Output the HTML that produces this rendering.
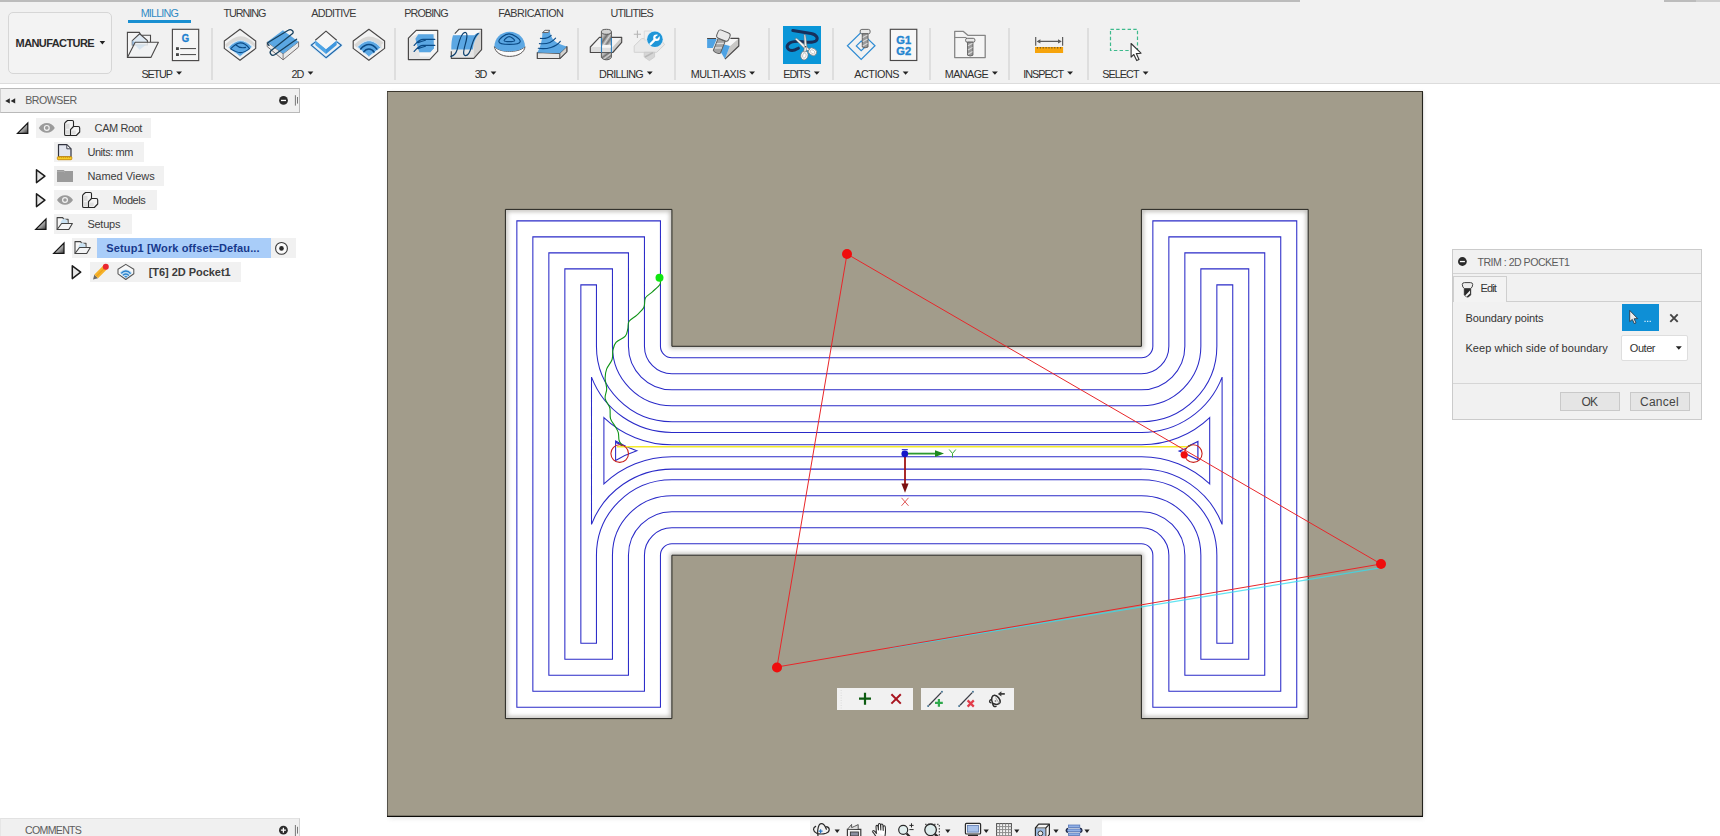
<!DOCTYPE html><html><head><meta charset="utf-8"><title>Fusion 360 - Manufacture</title><style>
html,body{margin:0;padding:0;background:#fff;}
body{width:1720px;height:836px;overflow:hidden;position:relative;font-family:"Liberation Sans",sans-serif;font-size:11px;color:#333;}
div{position:absolute;box-sizing:border-box;}
svg{position:absolute;left:0;top:0;}
svg text{font-family:"Liberation Sans",sans-serif;}
#tb{left:0;top:0;width:1720px;height:84px;background:#f1f1f1;border-bottom:1px solid #dcdcdc;}
.ts{top:0;height:2px;background:#bcbcbc;}
#wsb{left:8px;top:12px;width:104px;height:62px;border:1.4px solid #d6d6d6;border-radius:5px;background:#f3f3f3;}
.dv{top:27.8px;width:2px;height:52px;background:#dedede;}
#tabu{left:128.2px;top:20.4px;width:63px;height:3px;background:#1a8fd1;}
#edbg{left:782.5px;top:26px;width:38.7px;height:38px;background:#0a96d8;}
#bh{left:0;top:88px;width:300px;height:25px;background:#f0f0f0;border:1px solid #b9b9b9;border-left-color:#cfcfcf;}
#ch{left:0;top:818px;width:300px;height:20px;background:#f0f0f0;border:1px solid #d2d2d2;border-top-color:#e2e2e2;border-left-color:#e6e6e6;border-bottom:none;}
.rw{height:19.5px;background:#f1f1f1;}
#sel{left:97px;top:238.3px;width:174px;height:19.5px;background:#a9cdf9;}
#dlg{left:1452px;top:249px;width:250px;height:171px;background:#f1f1f1;border:1px solid #cbcbcb;}
#dlgh{left:0;top:0;width:248px;height:24px;border-bottom:1px solid #d3d3d3;}
#dtab{left:0px;top:26px;width:54px;height:26px;border:1px solid #cfcfcf;border-bottom:none;background:#f3f3f3;}
#dtl{left:53px;top:51px;width:195px;height:1px;background:#cfcfcf;}
#bsel{left:169px;top:54.3px;width:37.2px;height:27px;background:#0e8fd6;}
#dd{left:168.4px;top:84.8px;width:66.2px;height:26.4px;background:#fff;border:1px solid #dedede;border-radius:2px;}
#dsep{left:0;top:133px;width:248px;height:1px;background:#d6d6d6;}
.btn{top:142px;height:18.6px;background:#e5e5e5;border:1px solid #c9c9c9;}
.ft{top:687.8px;height:22.4px;background:#f1f1f1;}
#nb{left:810px;top:818px;width:292px;height:18px;background:#f1f1f1;}
</style></head><body>
<svg id="cv" width="1720" height="836" viewBox="0 0 1720 836">
<defs><filter id="bl" x="-5%" y="-5%" width="110%" height="110%"><feGaussianBlur stdDeviation="2.2"/></filter><filter id="bl2" x="-2%" y="-2%" width="104%" height="104%"><feGaussianBlur stdDeviation="2.5"/></filter><clipPath id="hc"><path d="M505.4 209.4H671.9V346.3H1141.4V209.4H1308.2V718.6H1141.4V555.2H671.9V718.6H505.4Z"/></clipPath></defs>
<rect x="389" y="93" width="1034" height="725" fill="#8a8a8a" opacity="0.28" filter="url(#bl2)"/>
<rect x="387.5" y="91.5" width="1035" height="725" fill="#a29c8b"/>
<path d="M387.5 816.5V91.5" stroke="#55524a" stroke-width="1"/><path d="M387 91.5H1423" stroke="#3c382e" stroke-width="1.1"/><path d="M1422.5 91.5V816.5" stroke="#24231c" stroke-width="1.1"/><path d="M387 816.4H1423" stroke="#0c0b08" stroke-width="1.4"/>
<path d="M505.4 209.4H671.9V346.3H1141.4V209.4H1308.2V718.6H1141.4V555.2H671.9V718.6H505.4Z" fill="#fff"/>
<g clip-path="url(#hc)"><path d="M505.4 209.4H671.9V346.3H1141.4V209.4H1308.2V718.6H1141.4V555.2H671.9V718.6H505.4Z" fill="none" stroke="#b9b7b2" stroke-width="4" filter="url(#bl)"/></g>
<path d="M505.4 209.4H671.9V346.3H1141.4V209.4H1308.2V718.6H1141.4V555.2H671.9V718.6H505.4Z" fill="none" stroke="#23221d" stroke-width="1"/>
<path d="M516.85 220.85L660.45 220.85L660.45 346.3A11.45 11.45 0 0 0 671.9 357.75L1141.4 357.75A11.45 11.45 0 0 0 1152.85 346.3L1152.85 220.85L1296.75 220.85L1296.75 707.15L1152.85 707.15L1152.85 555.2A11.45 11.45 0 0 0 1141.4 543.75L671.9 543.75A11.45 11.45 0 0 0 660.45 555.2L660.45 707.15L516.85 707.15ZM532.85 236.85L644.45 236.85L644.45 346.3A27.45 27.45 0 0 0 671.9 373.75L1141.4 373.75A27.45 27.45 0 0 0 1168.85 346.3L1168.85 236.85L1280.75 236.85L1280.75 691.15L1168.85 691.15L1168.85 555.2A27.45 27.45 0 0 0 1141.4 527.75L671.9 527.75A27.45 27.45 0 0 0 644.45 555.2L644.45 691.15L532.85 691.15ZM548.85 252.85L628.45 252.85L628.45 346.3A43.45 43.45 0 0 0 671.9 389.75L1141.4 389.75A43.45 43.45 0 0 0 1184.85 346.3L1184.85 252.85L1264.75 252.85L1264.75 675.15L1184.85 675.15L1184.85 555.2A43.45 43.45 0 0 0 1141.4 511.75L671.9 511.75A43.45 43.45 0 0 0 628.45 555.2L628.45 675.15L548.85 675.15ZM564.85 268.85L612.45 268.85L612.45 346.3A59.45 59.45 0 0 0 671.9 405.75L1141.4 405.75A59.45 59.45 0 0 0 1200.85 346.3L1200.85 268.85L1248.75 268.85L1248.75 659.15L1200.85 659.15L1200.85 555.2A59.45 59.45 0 0 0 1141.4 495.75L671.9 495.75A59.45 59.45 0 0 0 612.45 555.2L612.45 659.15L564.85 659.15ZM580.85 284.85L596.45 284.85L596.45 346.3A75.45 75.45 0 0 0 671.9 421.75L1141.4 421.75A75.45 75.45 0 0 0 1216.85 346.3L1216.85 284.85L1232.75 284.85L1232.75 643.15L1216.85 643.15L1216.85 555.2A75.45 75.45 0 0 0 1141.4 479.75L671.9 479.75A75.45 75.45 0 0 0 596.45 555.2L596.45 643.15L580.85 643.15ZM591.5 377.11A86.1 86.1 0 0 0 671.9 432.4L1141.4 432.4A86.1 86.1 0 0 0 1222.1 377.11L1222.1 524.39A86.1 86.1 0 0 0 1141.4 469.1L671.9 469.1A86.1 86.1 0 0 0 591.5 524.39ZM603.9 417.56A98.5 98.5 0 0 0 671.9 444.8L1141.4 444.8A98.5 98.5 0 0 0 1209.7 417.56L1209.7 483.94A98.5 98.5 0 0 0 1141.4 456.7L671.9 456.7A98.5 98.5 0 0 0 603.9 483.94ZM615.6 441.03A110.2 110.2 0 0 0 636.77 450.75A110.2 110.2 0 0 0 615.6 460.47Z" fill="none" stroke="#2a2ac8" stroke-width="1.05"/>
<path d="M617 446.8H1188" stroke="#f4ea2a" stroke-width="1.4" fill="none"/>
<path d="M616 442.3l6.5 3.4" stroke="#2a2ac8" stroke-width="1.3" fill="none"/>
<path d="M1188 446.2L1197.9 441.5V459.9L1182 452M1186.6 448.3L1179.2 451.1L1181.8 452.3" stroke="#2a2ac8" stroke-width="1.2" fill="none" stroke-linejoin="miter"/>
<path d="M1188 446.6l3-1.4" stroke="#1a9a1a" stroke-width="1.3"/>
<path d="M659.5 278C659.62 279 661.38 281.7 660.2 284C659.02 286.3 654.87 289.47 652.4 291.8C649.93 294.13 646.82 295.42 645.4 298C643.98 300.58 645.32 304.45 643.9 307.3C642.48 310.15 639.37 312.77 636.9 315.1C634.43 317.43 630.62 318.98 629.1 321.3C627.58 323.62 628.43 326.52 627.8 329C627.17 331.48 627.27 333.97 625.3 336.2C623.33 338.43 618.07 340.07 616 342.4C613.93 344.73 613.55 347.35 612.9 350.2C612.25 353.05 613.13 356.38 612.1 359.5C611.07 362.62 607.87 365.78 606.7 368.9C605.53 372.02 605.1 374.83 605.1 378.2C605.1 381.57 606.7 385.73 606.7 389.1C606.7 392.47 604.58 395.28 605.1 398.4C605.62 401.52 608.9 404.43 609.8 407.8C610.7 411.17 609.6 415.5 610.5 418.6C611.4 421.7 613.9 424.07 615.2 426.4C616.5 428.73 617.65 430.27 618.3 432.6C618.95 434.93 618.45 438.25 619.1 440.4C619.75 442.55 621.68 444.65 622.2 445.5" fill="none" stroke="#109418" stroke-width="1.1"/>
<circle cx="659.5" cy="277.7" r="4" fill="#0fe60f"/>
<circle cx="619.7" cy="453.6" r="8.8" fill="none" stroke="#c8201c" stroke-width="1.1"/>
<circle cx="1193.3" cy="453.6" r="8.8" fill="none" stroke="#c8201c" stroke-width="1.1"/>
<path d="M1378.5 568.2L890 648" stroke="#35dcee" stroke-opacity="0.78" stroke-width="1.35" fill="none"/>
<path d="M847 254L1381 564L777 667Z" stroke="#e8262a" stroke-width="1" fill="none"/>
<circle cx="847" cy="254" r="5" fill="#f00d0d"/>
<circle cx="1381" cy="564" r="5" fill="#f00d0d"/>
<circle cx="777" cy="667.5" r="5" fill="#f00d0d"/>
<circle cx="1184.2" cy="454.8" r="3.6" fill="#f00d0d"/>
<path d="M905 454V484" stroke="#a01414" stroke-width="1.8"/><path d="M901.4 483.5h7.2l-3.6 9.2z" fill="#7a1010"/>
<path d="M905 453.6H936" stroke="#2e9a2e" stroke-width="1.8"/><path d="M935 450.2v6.8l9-3.4z" fill="#1e8a1e"/>
<circle cx="904.8" cy="453.8" r="3.4" fill="#1616c8"/><path d="M901.8 449.7h6" stroke="#1616c8" stroke-width="1"/>
<path d="M949.2 449.5l3.3 4l3.3-4M952.5 453.5v4" stroke="#38a838" stroke-width="1" fill="none"/>
<path d="M901.5 497.8l7 8M908.5 497.8l-7 8" stroke="#e05a5a" stroke-width="1" fill="none"/>
</svg>
<div id="tb"><div class="ts" style="left:0;width:1300px"></div><div class="ts" style="left:1664px;width:32px"></div><div class="ts" style="left:1696px;width:24px;background:#cdcdcd"></div><div id="wsb"></div>
<div class="dv" style="left:211px"></div>
<div class="dv" style="left:394px"></div>
<div class="dv" style="left:576.5px"></div>
<div class="dv" style="left:673.7px"></div>
<div class="dv" style="left:767.6px"></div>
<div class="dv" style="left:831.8px"></div>
<div class="dv" style="left:928.8px"></div>
<div class="dv" style="left:1007.8px"></div>
<div class="dv" style="left:1087px"></div>
<div id="tabu"></div><div id="edbg"></div></div>
<div id="bh"></div><div id="ch"></div>
<div class="rw" style="left:36px;top:118.4px;width:115px"></div>
<div class="rw" style="left:54px;top:142.3px;width:90px"></div>
<div class="rw" style="left:54px;top:166.4px;width:110px"></div>
<div class="rw" style="left:54px;top:190.2px;width:103px"></div>
<div class="rw" style="left:54px;top:214.2px;width:77.80000000000001px"></div>
<div class="rw" style="left:72px;top:238.3px;width:223.8px"></div>
<div class="rw" style="left:90px;top:262.4px;width:150.8px"></div>
<div id="sel"></div>
<div id="dlg"><div id="dlgh"></div><div id="dtab"></div><div id="dtl"></div><div id="bsel"></div><div id="dd"></div><div id="dsep"></div><div class="btn" style="left:107px;width:60px"></div><div class="btn" style="left:177px;width:60px"></div></div>
<div class="ft" style="left:837px;width:76px"></div><div class="ft" style="left:921px;width:93px"></div><div id="nb"></div>
<svg id="ui" width="1720" height="836" viewBox="0 0 1720 836">
<text x="15.6" y="47" font-size="11" font-weight="700" fill="#2b2b2b" textLength="79" lengthAdjust="spacing">MANUFACTURE</text>
<path d="M99.6 41.1h5.6l-2.8 3.5z" fill="#222"/>
<text x="140.7" y="16.8" font-size="10.8" fill="#2f8ac4" textLength="38.2" lengthAdjust="spacing">MILLING</text>
<text x="223.4" y="16.8" font-size="10.8" fill="#3a3a3a" textLength="43.1" lengthAdjust="spacing">TURNING</text>
<text x="311.3" y="16.8" font-size="10.8" fill="#3a3a3a" textLength="45.1" lengthAdjust="spacing">ADDITIVE</text>
<text x="404.3" y="16.8" font-size="10.8" fill="#3a3a3a" textLength="44.3" lengthAdjust="spacing">PROBING</text>
<text x="498.3" y="16.8" font-size="10.8" fill="#3a3a3a" textLength="65.6" lengthAdjust="spacing">FABRICATION</text>
<text x="610.6" y="16.8" font-size="10.8" fill="#3a3a3a" textLength="43.1" lengthAdjust="spacing">UTILITIES</text>
<text x="141.4" y="77.9" font-size="10.8" fill="#2e2e2e" textLength="31.6" lengthAdjust="spacing">SETUP</text>
<path d="M176.2 71.4h5.8l-2.9 3.4z" fill="#222"/>
<text x="291.4" y="77.9" font-size="10.8" fill="#2e2e2e" textLength="13" lengthAdjust="spacing">2D</text>
<path d="M307.59999999999997 71.4h5.8l-2.9 3.4z" fill="#222"/>
<text x="474.7" y="77.9" font-size="10.8" fill="#2e2e2e" textLength="12.7" lengthAdjust="spacing">3D</text>
<path d="M490.59999999999997 71.4h5.8l-2.9 3.4z" fill="#222"/>
<text x="599.1" y="77.9" font-size="10.8" fill="#2e2e2e" textLength="44.6" lengthAdjust="spacing">DRILLING</text>
<path d="M646.9000000000001 71.4h5.8l-2.9 3.4z" fill="#222"/>
<text x="690.7" y="77.9" font-size="10.8" fill="#2e2e2e" textLength="55.3" lengthAdjust="spacing">MULTI-AXIS</text>
<path d="M749.2 71.4h5.8l-2.9 3.4z" fill="#222"/>
<text x="783.3" y="77.9" font-size="10.8" fill="#2e2e2e" textLength="27.4" lengthAdjust="spacing">EDITS</text>
<path d="M813.9 71.4h5.8l-2.9 3.4z" fill="#222"/>
<text x="854.2" y="77.9" font-size="10.8" fill="#2e2e2e" textLength="45.3" lengthAdjust="spacing">ACTIONS</text>
<path d="M902.7 71.4h5.8l-2.9 3.4z" fill="#222"/>
<text x="944.7" y="77.9" font-size="10.8" fill="#2e2e2e" textLength="44.1" lengthAdjust="spacing">MANAGE</text>
<path d="M992.0000000000001 71.4h5.8l-2.9 3.4z" fill="#222"/>
<text x="1023.3" y="77.9" font-size="10.8" fill="#2e2e2e" textLength="40.7" lengthAdjust="spacing">INSPECT</text>
<path d="M1067.2 71.4h5.8l-2.9 3.4z" fill="#222"/>
<text x="1102.3" y="77.9" font-size="10.8" fill="#2e2e2e" textLength="37.2" lengthAdjust="spacing">SELECT</text>
<path d="M1142.7 71.4h5.8l-2.9 3.4z" fill="#222"/>
<text x="25.2" y="104" font-size="10.6" fill="#5c5c5c" textLength="52" lengthAdjust="spacing">BROWSER</text>
<text x="25.1" y="834" font-size="10.6" fill="#5c5c5c" textLength="56.8" lengthAdjust="spacing">COMMENTS</text>
<text x="94.6" y="132" font-size="11" fill="#3c3c3c" textLength="47.8" lengthAdjust="spacing">CAM Root</text>
<text x="87.4" y="156" font-size="11" fill="#3c3c3c" textLength="46" lengthAdjust="spacing">Units: mm</text>
<text x="87.4" y="179.8" font-size="11" fill="#3c3c3c" textLength="67.3" lengthAdjust="spacing">Named Views</text>
<text x="112.7" y="204" font-size="11" fill="#3c3c3c" textLength="33" lengthAdjust="spacing">Models</text>
<text x="87.4" y="228" font-size="11" fill="#3c3c3c" textLength="33" lengthAdjust="spacing">Setups</text>
<text x="106.3" y="251.8" font-size="11" font-weight="700" fill="#17398c" textLength="153.3" lengthAdjust="spacing">Setup1 [Work offset=Defau...</text>
<text x="148.7" y="275.7" font-size="11" font-weight="700" fill="#3c3c3c" textLength="82" lengthAdjust="spacing">[T6] 2D Pocket1</text>
<text x="1477.5" y="265.5" font-size="10.6" fill="#5c5c5c" textLength="92.5" lengthAdjust="spacing">TRIM : 2D POCKET1</text>
<text x="1480.5" y="292.3" font-size="11" fill="#333" textLength="16.4" lengthAdjust="spacing">Edit</text>
<text x="1465.5" y="321.8" font-size="11" fill="#333" textLength="78" lengthAdjust="spacing">Boundary points</text>
<text x="1465.5" y="352" font-size="11" fill="#333" textLength="142.2" lengthAdjust="spacing">Keep which side of boundary</text>
<text x="1629.8" y="352" font-size="11" fill="#333" textLength="25.7" lengthAdjust="spacing">Outer</text>
<path d="M1675.8 346.2h6l-3.0 3.6z" fill="#222"/>
<text x="1581.4" y="405.6" font-size="12" fill="#444" textLength="16.6" lengthAdjust="spacing">OK</text>
<text x="1640" y="405.6" font-size="12" fill="#444" textLength="38.6" lengthAdjust="spacing">Cancel</text>
<path d="M127.4 57.4V32.4H139.3L141 35.3H150.5V42.3" fill="#f4f4f4" stroke="#4a4848" stroke-width="1.1"/>
<path d="M132.3 40.6L139.6 33.8L147.4 40.6V45H132.3Z" fill="#dfeaf4" stroke="#4a4848" stroke-width="1.05"/>
<path d="M132.3 40.6V46L135 42.3Z" fill="#9fc3e6"/>
<path d="M135.2 42.3H158.4L150.9 57.4H127.4Z" fill="#f1f2f3" fill-opacity="0.86" stroke="#4a4848" stroke-width="1.1" stroke-linejoin="round"/>
<path d="M134.7 44.5L139.5 49.7L146.5 44.5Z" fill="#cfe0ee" fill-opacity="0.8"/>
<rect x="172.4" y="29.3" width="26.3" height="31.3" fill="#f5f5f5" stroke="#4a4848" stroke-width="1.15"/>
<text x="181.8" y="42.3" font-size="11" font-weight="700" fill="#1c80cf" stroke="#1c80cf" stroke-width="0.35" textLength="7.4" lengthAdjust="spacingAndGlyphs">G</text>
<rect x="176" y="47.2" width="2.9" height="2.8" fill="#444"/><rect x="176" y="53.2" width="2.9" height="2.8" fill="#444"/>
<path d="M180.2 48.6H196M180.2 54.6H196" stroke="#444" stroke-width="1"/>
<path d="M240 29.3L255.7 41V48.4L240 60.3L224.3 48.4V41Z" fill="#f3f3f3" stroke="#4a4848" stroke-width="1.15" stroke-linejoin="round"/>
<path d="M225.2 44.6C230 40 235 36.2 240.5 36.2C246 36.2 251 39.6 255 43.6V47.6C251 43.6 246 40.6 240.5 40.6C235 40.6 230 44 226.4 47.6Z" fill="#d9d8d6"/>
<path d="M228.5 47.3C232 43.6 236.5 40.6 240.5 40.6C244.5 40.6 249 43.4 252.2 47L240 56.6Z" fill="#5ba7e3" stroke="#cfe6f8" stroke-width="1"/>
<path d="M230.6 48.9C234 45.4 237.5 42.9 240.5 42.9C243.5 42.9 247 45.4 249.5 48.6C246.5 51 243.5 52.6 240.5 52.6C237.5 52.6 234 51 230.6 48.9Z" fill="none" stroke="#0b4a85" stroke-width="1.1"/>
<path d="M236 45C238.5 47.4 242 48.4 246 47.4" fill="none" stroke="#0b4a85" stroke-width="1.1"/>
<path d="M267.2 42V46.6L283.1 59.8L298.6 47V41.8L283.1 53.8Z" fill="#e9e9e9" stroke="#6a6262" stroke-width="0.9" stroke-linejoin="round"/>
<path d="M283.1 53.8V59.8" stroke="#6a6262" stroke-width="0.8"/>
<path d="M282.9 30.3L298.6 41.8L283.1 53.8L267.2 42Z" fill="#5ba7e3"/>
<path d="M269 45.4C266.5 43.6 267.6 43 269.3 41.7L288.2 30.2C291 28.4 294.6 31.4 292.6 33.6L271.2 50.4C268.6 52.6 271.6 56.6 274.6 54.8L296.6 39.2" fill="none" stroke="#17405e" stroke-width="1.3" stroke-linecap="round" stroke-linejoin="round"/>
<path d="M315.8 41.6L311.2 45.2L326 57.7L341.3 45.2L336.6 41.6" fill="none" stroke="#cfe8fa" stroke-width="2.6" stroke-linejoin="round"/>
<path d="M315.8 41.6L311.2 45.2L326 57.7L341.3 45.2L336.6 41.6" fill="none" stroke="#1f64a6" stroke-width="1.1" stroke-linejoin="round"/>
<path d="M315.3 40.2V44.9L326 54.1V48.9Z" fill="#4fa5e6"/><path d="M336.7 40.2V44.9L326 54.1V48.9Z" fill="#3f97df"/>
<path d="M326 31.1L336.7 40.2L326 48.9L315.3 40.2Z" fill="#f6f6f6"/>
<path d="M315.3 40.2L326 31.1L336.7 40.2" fill="none" stroke="#4a4848" stroke-width="1.15" stroke-linejoin="round"/>
<path d="M368.9 29.3L384.59999999999997 41V48.4L368.9 60.3L353.2 48.4V41Z" fill="#f3f3f3" stroke="#4a4848" stroke-width="1.15" stroke-linejoin="round"/>
<path d="M354.2 44.8C359 40 364 36.4 369 36.4C374.5 36.4 380 39.6 383.6 42.4L384 47.2L381.6 49C378 44.6 373.5 40.8 369 40.8C364.5 40.8 360 44 356.4 47.6Z" fill="#d9d8d6"/>
<path d="M381.4 44.4L384 42.4V47.6L381.4 49.6Z" fill="#efefef"/>
<path d="M357.4 47C361 43.4 365 40.7 369 40.7C373 40.7 377.5 43.6 380.7 47.5L368.9 56.7Z" fill="#5ba7e3" stroke="#cfe6f8" stroke-width="1"/>
<path d="M360.3 49.4C363 46.4 366 44.6 368.9 44.6C372 44.6 375 46.6 377.3 49.6" fill="none" stroke="#0b4a85" stroke-width="1.5"/>
<path d="M363.4 52.3C365 50.2 367 49.1 368.9 49.1C371 49.1 373 50.4 374.4 52.5" fill="none" stroke="#0b4a85" stroke-width="1.5"/>
<path d="M416.2 30.3H437.7V51.2L429.8 59.6H408.4V38.1Z" fill="#e6e6e6"/>
<path d="M408.4 38.1L416.2 30.3H437.7L434.6 34H417.6Z" fill="#f9f9f9"/>
<path d="M418.3 34.2H433.5L434 48.6L430.4 52.5H419.4L417.3 46L415.4 38.7Z" fill="#5ba7e3"/>
<path d="M430.4 52.5L434 48.6L434.6 34L437.7 30.3V51.2L429.8 59.6L430 56.5Z" fill="#f4f4f4"/>
<path d="M419.4 52.5H430.4L430 56.6H419.8Z" fill="#f7f7f7"/>
<path d="M416.2 30.3H437.7V51.2L429.8 59.6H408.4V38.1Z" fill="none" stroke="#4a4848" stroke-width="1.2" stroke-linejoin="round"/>
<path d="M414.1 45.5C417 42.4 419 39.4 423 39.4H434.8M418 42.6C420.5 41.6 422.5 41 425.4 40.2" fill="none" stroke="#0b4a85" stroke-width="1.15" stroke-linecap="round"/>
<path d="M414.1 51.5C417 48.4 419 45.4 423 45.4H434.8M418 48.6C420.5 47.6 422.5 47 425.4 46.2" fill="none" stroke="#0b4a85" stroke-width="1.15" stroke-linecap="round"/>
<path d="M459.1 29.2H481.6V49.6L473.8 58.3H451.3V49.8L455 34Z" fill="#e6e6e6" stroke="none"/>
<path d="M459.1 29.2H481.6L476 35.3H453.6Z" fill="#f8f8f8"/>
<path d="M481.6 29.2V49.6L473.8 58.3V46C474.4 40 477 34 481.6 29.2Z" fill="#d4d3d1"/>
<path d="M453 35.3H474.4C475.6 33.6 477.6 32.4 479.6 33.3C475.6 37.4 473.4 43 472.8 49.6H451.3C451.3 44 451.6 39.4 453 35.3Z" fill="#5ba7e3"/>
<path d="M454.8 33.6L459.1 29.2H481.6V49.6L473.8 58.3H451.3V51.2" fill="none" stroke="#4a4848" stroke-width="1.15" stroke-linejoin="round"/>
<path d="M450.8 56.4C454 55.6 456 53.4 457 50C458.6 44 460.6 32.4 465 32.4C468.4 32.4 466.6 40 465 45.4C463.6 50.4 462.6 55.4 465.4 55.6C469 55.8 470.6 50 471.6 46C473 41 474.4 36.4 478.2 33.4" fill="none" stroke="#0b3f6e" stroke-width="1.15" stroke-linecap="round"/>
<path d="M494.4 46.5C495 52 501 56.4 509.5 56.4C518 56.4 524.6 52.4 525 46.6C521 50.4 515 51.4 509.5 51.4C504 51.4 498 50.4 494.4 46.5Z" fill="#fbfbfb" stroke="#5a5656" stroke-width="1"/>
<path d="M494.4 46.5C494.4 38.5 501 31.8 509.6 31.8C518.2 31.8 525 38.5 525 46.6C521 50.4 515 51.4 509.5 51.4C504 51.4 498 50.4 494.4 46.5Z" fill="#5ba7e3"/>
<path d="M509 33.8C513 33.8 520.6 39 520.2 41.6C519.8 44 513 44.4 509.4 44.4C505.6 44.4 499.2 44 498.9 41.6C498.6 39 505 33.8 509 33.8Z" fill="none" stroke="#0b4a85" stroke-width="1.2"/>
<path d="M509.2 36.7C511 36.7 514.8 39.6 514.6 40.7C514.4 41.6 511 41.7 509.3 41.7C507.6 41.7 504.4 41.6 504.2 40.7C504 39.6 507.4 36.7 509.2 36.7Z" fill="none" stroke="#0b4a85" stroke-width="1.2"/>
<path d="M537.3 52.5V58.5H559.8L566.8 51.7V46.6L559.8 53.3Z" fill="#e6e6e6" stroke="#4a4848" stroke-width="1.2" stroke-linejoin="round"/>
<path d="M559.8 53.3V58.5L566.8 51.7V46.6Z" fill="#d2d1cf" stroke="#4a4848" stroke-width="1" stroke-linejoin="round"/>
<path d="M542.5 32.6L545.1 30.3H549.6C550.4 36 553 40.4 556.6 42.6C559.6 44.4 563.6 45.6 566.8 46.6L559.8 53.3L537.3 52.5C540.4 47.6 542.2 41 542.5 32.6Z" fill="#5ba7e3"/>
<path d="M542.5 32.6L545.1 30.3H549.6L548.4 32.4Z" fill="#fafafa" stroke="#5a5656" stroke-width="0.9" stroke-linejoin="round"/>
<path d="M540.4 38.4C545 38.8 549 37.6 551.2 35.3M539.4 43.6C546 44.4 552 42.4 555.6 38.1M538.3 48.3C547 49.6 556 47 560.3 41.3" fill="none" stroke="#0b4a85" stroke-width="1.1" stroke-linecap="round"/>
<path d="M599.4 37.3H621.7V42.3L612.8 52.5H590.3V47Z" fill="#f3f3f3" stroke="none"/>
<path d="M590.3 47H612.8V52.5H590.3Z" fill="#dedede"/><path d="M612.8 47L621.7 37.3V42.3L612.8 52.5Z" fill="#cbcac8"/>
<path d="M599.4 37.3H621.7V42.3L612.8 52.5H590.3V47Z" fill="none" stroke="#4a4848" stroke-width="1.15" stroke-linejoin="round"/>
<defs><linearGradient id="cyl" x1="0" y1="0" x2="1" y2="1"><stop offset="0" stop-color="#d8d8d8"/><stop offset="0.25" stop-color="#b4b4b4"/><stop offset="0.4" stop-color="#6e6e6e"/><stop offset="0.55" stop-color="#d4d4d4"/><stop offset="0.68" stop-color="#787878"/><stop offset="0.84" stop-color="#c8c8c8"/><stop offset="1" stop-color="#808080"/></linearGradient></defs>
<path d="M601.4 31.8V44.6C603 47 610 47 611.4 44.6V31.8Z" fill="url(#cyl)" stroke="#5a5a5a" stroke-width="1"/>
<ellipse cx="606.4" cy="31.8" rx="5" ry="2.5" fill="#d2d2d2" stroke="#5a5a5a" stroke-width="1"/>
<path d="M601.4 52.6V57.4C603 60.6 610 60.6 611.4 57.4V52.6Z" fill="url(#cyl)" stroke="#5a5a5a" stroke-width="1"/>
<path d="M601.5 38V52.5M611.4 38V52.5" stroke="#2e7fbd" stroke-width="1.1"/>
<rect x="602.2" y="44.8" width="8.6" height="3" fill="#f6f6f6"/>
<path d="M641.6 38.6H660L664.6 44.6L656.7 52.3H634.2V46Z" fill="#e9e9e9" stroke="#d2d2d2" stroke-width="1"/>
<path d="M644.2 52.3V57L649.4 60.6L654.6 57V52.3Z" fill="#d6d6d6" stroke="#c9c9c9" stroke-width="0.8"/>
<path d="M645 57L653 52.6" stroke="#b9b9b9" stroke-width="1.6"/>
<path d="M644.3 31H652V40H644.3Z" fill="#efefef" stroke="#d6d6d6" stroke-width="0.8"/>
<path d="M637.4 30.6V38M633.8 34.3H641" stroke="#b5b5b5" stroke-width="1.1"/>
<circle cx="654.9" cy="39.2" r="8.4" fill="#dcedf8"/><circle cx="654.9" cy="39.2" r="7.8" fill="#1f96d8"/>
<path d="M650.5 44.1L655.2 39.4" stroke="#fff" stroke-width="2.3" stroke-linecap="round"/>
<circle cx="656.5" cy="37.8" r="3.3" fill="#fff"/><circle cx="656.8" cy="37.5" r="1.35" fill="#1f96d8"/><path d="M656.8 37.5L660 34.3" stroke="#1f96d8" stroke-width="2"/>
<path d="M707.1 38.7H716.9L712.8 48.1H707.1Z" fill="#4fa3e4"/>
<path d="M729.9 46L738.8 38.3V46L725 59.1Z" fill="#c9c8c6"/><path d="M730.4 38.3H738.8L729.9 46L727 43.6Z" fill="#f7f7f7"/>
<path d="M724.2 44.4L729.9 46L725 59.1L720.1 50.9Z" fill="#4fa3e4"/>
<path d="M707.1 38.5H716M730.4 38.3H738.8V46L725 59.1" fill="none" stroke="#4a4848" stroke-width="1.15" stroke-linejoin="round"/>
<g transform="rotate(22 720 44)"><path d="M716.2 39.5V52.4C717.6 54 722.4 54 723.8 52.4V39.5Z" fill="#a4a4a4" stroke="#5a5a5a" stroke-width="0.9"/><path d="M716.8 44.8L723.2 42M716.8 49.6L723.2 46.8" stroke="#e0e0e0" stroke-width="1.3"/><rect x="713.6" y="30.6" width="12.8" height="8.6" rx="2.6" fill="#e9e9e9" stroke="#5a5a5a" stroke-width="0.9"/></g>
<path d="M792.8 30.4L811 33.6C816.6 34.6 818.6 38.4 816 40.8C813.6 42.8 808 42.4 803.6 41.9M803 41.8C797 41 791.6 41 788.6 43.8C785.6 46.6 787.6 50.4 792 50.6C794.6 50.7 796.4 49.4 798.4 48.2" fill="none" stroke="#17305c" stroke-width="3" stroke-linecap="round" stroke-linejoin="round"/>
<ellipse cx="804.4" cy="55.4" rx="3.6" ry="4.6" fill="#fdfdfd" stroke="#7a7a7a" stroke-width="0.7" transform="rotate(14 804.4 55.4)"/><ellipse cx="804.4" cy="55.5" rx="1.7" ry="2.7" fill="#fff" stroke="#a9a9a9" stroke-width="0.6" transform="rotate(14 804.4 55.4)"/>
<ellipse cx="812.5" cy="51.7" rx="4.4" ry="3.5" fill="#fdfdfd" stroke="#7a7a7a" stroke-width="0.7" transform="rotate(35 812.5 51.7)"/><ellipse cx="812.6" cy="51.8" rx="2.5" ry="1.7" fill="#fff" stroke="#a9a9a9" stroke-width="0.6" transform="rotate(35 812.5 51.7)"/>
<path d="M794.8 38.9L796.6 38.2L807.6 47.6L809.6 49.6L807.2 50.6L804.6 48.8Z" fill="#f4f4f4" stroke="#6e6e6e" stroke-width="0.55" stroke-linejoin="round"/>
<path d="M804 34.4L805.6 34.9L807 46.8L806 51.6L803.6 52L804.4 46.8Z" fill="#ececec" stroke="#6e6e6e" stroke-width="0.55" stroke-linejoin="round"/>
<circle cx="805.7" cy="46.8" r="0.75" fill="#333"/>
<path d="M861.2 32.4L875 45.7L861.2 59.5L847.4 45.7Z" fill="none" stroke="#2e8bd3" stroke-width="1.2"/>
<path d="M861.2 41L866.2 45.9L861.2 50.6L856.3 45.9Z" fill="none" stroke="#2e8bd3" stroke-width="1.2"/>
<rect x="860.2" y="29.4" width="9.899999999999977" height="4.399999999999999" rx="1.6" fill="#e9e9e9" stroke="#5a5a5a" stroke-width="0.9"/><path d="M862.2790000000001 33.8V47q2.8709999999999933 1.6 5.741999999999987 0V33.8z" fill="#9a9a9a" stroke="#5a5a5a" stroke-width="0.9"/><path d="M862.7790000000001 37.47599999999999L867.5210000000001 34.876" stroke="#d8d8d8" stroke-width="1.1"/><path d="M862.7790000000001 41.699999999999996L867.5210000000001 39.1" stroke="#d8d8d8" stroke-width="1.1"/><path d="M862.7790000000001 45.92399999999999L867.5210000000001 43.324" stroke="#d8d8d8" stroke-width="1.1"/>
<rect x="890.3" y="29.3" width="26.5" height="31.2" fill="#f7f7f7" stroke="#4a4848" stroke-width="1.15"/>
<text x="896.3" y="43.7" font-size="10.4" font-weight="700" fill="#2485d0" stroke="#2485d0" stroke-width="0.35" textLength="14.8" lengthAdjust="spacingAndGlyphs">G1</text>
<text x="896.3" y="54.8" font-size="10.4" font-weight="700" fill="#2485d0" stroke="#2485d0" stroke-width="0.35" textLength="14.8" lengthAdjust="spacingAndGlyphs">G2</text>
<path d="M954.7 31.4H963.4L967.8 35.3H985.2V57.6H954.7Z" fill="#f5f5f5" stroke="#868686" stroke-width="1.3" stroke-linejoin="round"/>
<path d="M954.7 37.5H966.5" stroke="#868686" stroke-width="1.1"/>
<rect x="965.6" y="38.3" width="9.299999999999955" height="3.9000000000000057" rx="1.6" fill="#e9e9e9" stroke="#5a5a5a" stroke-width="0.9"/><path d="M967.553 42.2V55.2q2.6969999999999867 1.6 5.3939999999999735 0V42.2z" fill="#9a9a9a" stroke="#5a5a5a" stroke-width="0.9"/><path d="M968.053 45.84L972.447 43.24000000000001" stroke="#d8d8d8" stroke-width="1.1"/><path d="M968.053 50.0L972.447 47.400000000000006" stroke="#d8d8d8" stroke-width="1.1"/><path d="M968.053 54.16L972.447 51.56" stroke="#d8d8d8" stroke-width="1.1"/>
<path d="M1035.7 37V45.8M1062.6 37V45.8M1038 41.4H1060.4" stroke="#5c5c5c" stroke-width="1.2" fill="none"/>
<path d="M1036.6 41.4L1040.4 39.2V43.6ZM1061.8 41.4L1058 39.2V43.6Z" fill="#5c5c5c"/>
<rect x="1035" y="47" width="28.1" height="6" fill="#f6a40c"/>
<path d="M1037.4 47v1.5M1040.3 47v1.5M1043.2 47v1.5M1046.1 47v1.5M1049 47v1.5M1051.9 47v1.5M1054.8 47v1.5M1057.7 47v1.5M1060.6 47v1.5" stroke="#5a4a20" stroke-width="0.9"/>
<rect x="1110.5" y="29.3" width="27" height="21.2" fill="none" stroke="#3dba8c" stroke-width="1.2" stroke-dasharray="3.4 2.3"/>
<path d="M1131.1 43.5V57.1L1133.8 54.5L1136.7 60.6L1139 59.6L1136.3 53.6L1141 53.2Z" fill="#fff" stroke="#333" stroke-width="1.1" stroke-linejoin="round"/>
<defs><linearGradient id="tg" x1="0.2" y1="0.2" x2="1" y2="1"><stop offset="0" stop-color="#fafafa"/><stop offset="0.55" stop-color="#9a9a9a"/><stop offset="1" stop-color="#3a3a3a"/></linearGradient></defs>
<path d="M5.2 100.9L9.8 98.3V103.5ZM10.6 100.9L15.2 98.3V103.5Z" fill="#2a2a2a"/>
<circle cx="283.5" cy="100.4" r="4.4" fill="#2b2b2b"/><rect x="281" y="99.8" width="5" height="1.3" fill="#fff"/>
<path d="M295.4 95.2V105.6" stroke="#6a6a6a" stroke-width="0.9"/><path d="M297.5 97V103.6" stroke="#6a6a6a" stroke-width="0.9"/>
<circle cx="283.4" cy="830.2" r="4.4" fill="#2b2b2b"/><path d="M280.9 830.2H285.9M283.4 827.7V832.7" stroke="#fff" stroke-width="1.3"/>
<path d="M295.4 825V836" stroke="#6a6a6a" stroke-width="0.9"/><path d="M297.5 826.8V833.6" stroke="#6a6a6a" stroke-width="0.9"/>
<path d="M27.8 123.0V133.29999999999998H17.5Z" fill="url(#tg)" stroke="#151515" stroke-width="1.2" stroke-linejoin="miter"/>
<path d="M38.8 127.9C42.3 121.5 51.3 121.5 54.8 127.9C51.3 134.3 42.3 134.3 38.8 127.9Z" fill="#9b9b9b"/><circle cx="46.8" cy="127.9" r="2.4" fill="#9b9b9b" stroke="#f3f3f3" stroke-width="1.2"/>
<path d="M67.5 120.5H72.3Q73.5 120.5 73.5 121.8V126.5H78.3Q79.7 126.5 79.7 128.0V132.0L76.3 135.5H65.89999999999999Q64.6 135.5 64.6 134.2V123.60000000000001Q64.6 122.60000000000001 67.5 120.5Z" fill="#f4f4f4" stroke="#262626" stroke-width="1.1" stroke-linejoin="round"/><path d="M73.5 126.5L70.5 129.6V135.5" fill="none" stroke="#262626" stroke-width="1.2" stroke-linejoin="round"/><rect x="65.89999999999999" y="123.8" width="3.6" height="5" fill="#dcdcdc"/><rect x="65.7" y="130.2" width="4" height="4.2" fill="#dcdcdc"/><rect x="71.89999999999999" y="130.6" width="3.8" height="3.8" fill="#dedede"/>
<path d="M58.5 157V144.6H66.8L71 148.8V157Z" fill="#e3e6ef" stroke="#30323e" stroke-width="1.2" stroke-linejoin="round"/><path d="M66.8 144.6V148.8H71Z" fill="#fafafa" stroke="#30323e" stroke-width="0.9" stroke-linejoin="round"/>
<rect x="57.4" y="156.7" width="14.4" height="3" rx="0.8" fill="#f7cf2a" stroke="#c98a08" stroke-width="0.9"/><path d="M59.4 156.8v1.3M61.4 156.8v1.3M63.4 156.8v1.3M65.4 156.8v1.3M67.4 156.8v1.3M69.4 156.8v1.3" stroke="#c98a08" stroke-width="0.7"/>
<path d="M36.5 169.8L44.9 176.20000000000002L36.5 182.60000000000002Z" fill="#e6e6e6" stroke="#1c1c1c" stroke-width="1.5" stroke-linejoin="round"/>
<path d="M57 169.9H63.6L64.8 171.1H73V182H57Z" fill="#9a9a9a"/><path d="M57 171.4H63.4L64.8 172.4" stroke="#b6b6b6" stroke-width="0.7" fill="none"/>
<path d="M36.5 193.8L44.9 200.20000000000002L36.5 206.60000000000002Z" fill="#e6e6e6" stroke="#1c1c1c" stroke-width="1.5" stroke-linejoin="round"/>
<path d="M57 200C60.5 193.6 69.5 193.6 73 200C69.5 206.4 60.5 206.4 57 200Z" fill="#9b9b9b"/><circle cx="65" cy="200" r="2.4" fill="#9b9b9b" stroke="#f3f3f3" stroke-width="1.2"/>
<path d="M85.5 192.5H90.3Q91.5 192.5 91.5 193.79999999999998V198.5H96.3Q97.7 198.5 97.7 200.0V204.0L94.3 207.5H83.89999999999999Q82.6 207.5 82.6 206.2V195.6Q82.6 194.6 85.5 192.5Z" fill="#f4f4f4" stroke="#262626" stroke-width="1.1" stroke-linejoin="round"/><path d="M91.5 198.5L88.5 201.6V207.5" fill="none" stroke="#262626" stroke-width="1.2" stroke-linejoin="round"/><rect x="83.89999999999999" y="195.79999999999998" width="3.6" height="5" fill="#dcdcdc"/><rect x="83.7" y="202.2" width="4" height="4.2" fill="#dcdcdc"/><rect x="89.89999999999999" y="202.6" width="3.8" height="3.8" fill="#dedede"/>
<path d="M46.0 219.0V229.29999999999998H35.699999999999996Z" fill="url(#tg)" stroke="#151515" stroke-width="1.2" stroke-linejoin="miter"/>
<path d="M57.1 229.5V217.6H62.7L63.7 219.2H68.1V223.2" fill="#f6f6f6" stroke="#444" stroke-width="1.1" stroke-linejoin="round"/><path d="M60.5 223.4C61.7 217.2 67.5 218.2 67.7 223.4Z" fill="#c9e2f3"/><path d="M61.6 223.5H72.4L68.8 229.5H57.1Z" fill="#f3f4f5" stroke="#444" stroke-width="1.1" stroke-linejoin="round"/>
<path d="M64.0 243.0V253.29999999999998H53.699999999999996Z" fill="url(#tg)" stroke="#151515" stroke-width="1.2" stroke-linejoin="miter"/>
<path d="M75 253.5V241.6H80.6L81.6 243.2H86V247.2" fill="#f6f6f6" stroke="#444" stroke-width="1.1" stroke-linejoin="round"/><path d="M78.4 247.4C79.6 241.2 85.4 242.2 85.6 247.4Z" fill="#c9e2f3"/><path d="M79.5 247.5H90.3L86.7 253.5H75Z" fill="#f3f4f5" stroke="#444" stroke-width="1.1" stroke-linejoin="round"/>
<circle cx="281.5" cy="248.4" r="5.9" fill="#fbfbfb" stroke="#3a3a3a" stroke-width="1.1"/><circle cx="281.5" cy="248.4" r="2.3" fill="#2a2a2a"/>
<path d="M72.3 265.8L80.7 272.2L72.3 278.6Z" fill="#e6e6e6" stroke="#1c1c1c" stroke-width="1.5" stroke-linejoin="round"/>
<path d="M93 279.6L94.4 274.6L98 278.2Z" fill="#6a6a6a"/><path d="M94.4 274.6L103.4 265.6L107 269.2L98 278.2Z" fill="#f6b22a"/><path d="M96.2 276.4L105.2 267.4" stroke="#e79a12" stroke-width="1"/><circle cx="105.8" cy="266.8" r="3" fill="#ea2630"/>
<path d="M125.8 264.4L133.8 269.2V273.8L125.8 279.5L118 273.8V269.2Z" fill="#f8f8f8" stroke="#565656" stroke-width="1.05" stroke-linejoin="round"/>
<path d="M119.6 272.8C121.6 270.6 123.8 269.6 125.8 269.6C128 269.6 130.4 270.8 132.2 273L125.8 277.9Z" fill="#bcdcf3"/>
<path d="M121.2 273.4C122.6 271.8 124.2 271 125.8 271C127.6 271 129.2 271.8 130.6 273.6M122.8 275.4C123.8 274.4 124.8 274 125.8 274C127 274 128 274.5 129 275.6M124.6 277C125 276.7 125.4 276.6 125.9 276.6C126.4 276.6 126.8 276.7 127.2 277" fill="none" stroke="#2a82cc" stroke-width="1.3"/>
<circle cx="1462.4" cy="261.5" r="4.4" fill="#2b2b2b"/><rect x="1459.9" y="260.9" width="5" height="1.3" fill="#fff"/>
<path d="M1464.3 288.4V294.8Q1467.5 299.4 1470.7 294.8V288.4Z" fill="#2a2a2a" stroke="#2a2a2a" stroke-width="0.8"/><path d="M1465.2 295.6L1470 290.6V293.4L1466.6 296.8Z" fill="#f3f3f3"/>
<path d="M1462.3 284.4Q1462.3 282.6 1464.6 282.6H1470.4Q1472.7 282.6 1472.7 284.4Q1472.7 287.4 1470.6 288.6H1464.4Q1462.3 287.4 1462.3 284.4Z" fill="#ededed" stroke="#444" stroke-width="1"/>
<path d="M1629.7 310.4V321.6L1632.3 319.4L1634.3 323.6L1636 322.8L1634.1 318.8L1637.7 318.6Z" fill="#ececec" stroke="#2b3a48" stroke-width="0.9" stroke-linejoin="round"/>
<path d="M1644.4 321.4h1.3M1647 321.4h1.3M1649.6 321.4h1.3" stroke="#cfe9fa" stroke-width="1.2"/>
<path d="M1670.3 314.4L1677.7 321.8M1677.7 314.4L1670.3 321.8" stroke="#444" stroke-width="1.9"/>
<path d="M841.2 690V709" stroke="#d9d9d9" stroke-width="1" stroke-dasharray="1 1.5"/>
<path d="M859 698.7H871M865 692.7V704.7" stroke="#0d5c12" stroke-width="2.2"/>
<path d="M891.4 694.2L900.8 703.6M900.8 694.2L891.4 703.6" stroke="#a8141f" stroke-width="2"/>
<path d="M929 705.2L941.2 692.6" stroke="#3c3c46" stroke-width="1.3"/>
<rect x="927.3" y="705.2" width="1.7" height="1.7" fill="#3f6f8f"/><rect x="941.1" y="690.9" width="1.7" height="1.7" fill="#3f6f8f"/>
<path d="M935 702.9H942.8M938.9 699V706.8" stroke="#2ea94c" stroke-width="2.2"/>
<path d="M960 705.2L972.2 692.6" stroke="#3c3c46" stroke-width="1.3"/>
<rect x="958.3" y="705.2" width="1.7" height="1.7" fill="#3f6f8f"/><rect x="972.1" y="690.9" width="1.7" height="1.7" fill="#3f6f8f"/>
<path d="M967.6 700.4L973.8 706.6M973.8 700.4L967.6 706.6" stroke="#e23c4a" stroke-width="2.2"/>
<path d="M992.6 703.2C990.4 698.6 992.2 695 994.6 695.2C997.4 695.4 1000.6 699.6 1000.2 702.2C999.8 704.4 996 705.4 992.6 703.2ZM992.6 703.2C992.8 705.6 994 707 996 706.4" fill="none" stroke="#2c2c2c" stroke-width="1.5" stroke-linecap="round"/>
<path d="M991.4 699.4C989 700.4 989 702.4 991 702.8" fill="none" stroke="#2c2c2c" stroke-width="1.3" stroke-linecap="round"/>
<path d="M995.6 697.6L999.2 703.4" stroke="#9a9a9a" stroke-width="0.9"/><circle cx="995.5" cy="701" r="0.9" fill="#8a8a8a"/>
<path d="M999 693.9H1004.8" stroke="#3a3a3a" stroke-width="1.7"/><path d="M997.8 693.9L1001.4 691.2V696.6Z" fill="#3a3a3a"/>
<path d="M818 836C817 830 818.4 823.6 821.4 823.6C823.6 823.6 825.6 827 826.4 829.2M815.6 826.4C812.6 828 813 831.6 816.4 833M826.6 826.6C830 827.6 830.4 831.6 826 833.2C823 834.2 819.4 834.2 816.6 833.2" fill="none" stroke="#2a2a2a" stroke-width="1.2" stroke-linecap="round"/>
<path d="M820.6 829.2V833.2M818.6 831.2H822.6" stroke="#2a78c8" stroke-width="1.2"/>
<path d="M834.6 829.4h5.2l-2.6 3.5z" fill="#222"/>
<path d="M847.4 836V829.4H860.8V836" fill="#f4f4f4" stroke="#3a3a3a" stroke-width="1.2"/><path d="M847.6 829.2L851.6 824.4V827.6L854.4 826.4L858.2 824.6V829" fill="#dcdcdc" stroke="#4a4a4a" stroke-width="0.9" stroke-linejoin="round"/><rect x="850.4" y="832" width="8" height="4" fill="#8a8fa0" stroke="#3a3a3a" stroke-width="0.9"/>
<path d="M873 830.4C874.6 830.4 875.6 831.8 876.4 833.4L876 826.4C876 825 877.8 825 878 826.4L878.4 830V824.6C878.4 823.2 880.4 823.2 880.5 824.6L880.8 830V825C880.8 823.6 882.8 823.6 882.9 825L883.2 830.4V826.8C883.3 825.4 885.2 825.6 885.3 827C885.6 830 885.6 833 885 836M875.6 836C874.8 834.4 873.6 832.8 872.4 831.6" fill="#fff" stroke="#2a2a2a" stroke-width="1.05" stroke-linejoin="round" stroke-linecap="round"/>
<circle cx="903.2" cy="829.8" r="4.5" fill="#e2efef" stroke="#2a2a2a" stroke-width="1.2"/><path d="M906.6 833.4L909.6 836.6" stroke="#2a2a2a" stroke-width="2.2"/><path d="M909.4 825.4H913.6M911.5 823.3V827.5M909.4 829.6H913.6" stroke="#2a2a2a" stroke-width="1"/>
<path d="M925 824.3H939.3V836" fill="none" stroke="#3a3a3a" stroke-width="1" stroke-dasharray="1.6 1.4"/><circle cx="930.6" cy="829.8" r="5.8" fill="#dcebeb" stroke="#2a2a2a" stroke-width="1.3"/><path d="M934.8 834L938 837" stroke="#2a2a2a" stroke-width="2.4"/>
<path d="M945.2 829.4h5.2l-2.6 3.5z" fill="#222"/>
<rect x="965.4" y="823.4" width="15.2" height="10.6" rx="1" fill="#f2f2f2" stroke="#2a2a2a" stroke-width="1.2"/><rect x="967.6" y="825.5" width="10.8" height="6.6" fill="#a9c2ea" stroke="#5a78b0" stroke-width="0.8"/><path d="M968 835.4H978" stroke="#2a2a2a" stroke-width="1.4"/>
<path d="M983.6 829.4h5.2l-2.6 3.5z" fill="#222"/>
<rect x="996.6" y="823.6" width="14.8" height="13" fill="#f6f6f6" stroke="#4a4a4a" stroke-width="1"/><path d="M999.6 823.6V836M1002.6 823.6V836M1005.6 823.6V836M1008.6 823.6V836M996.6 826.6H1011.4M996.6 829.6H1011.4M996.6 832.6H1011.4M996.6 835.6H1011.4" stroke="#8c8c8c" stroke-width="1"/>
<path d="M1014.2 829.4h5.2l-2.6 3.5z" fill="#222"/>
<path d="M1035.4 836V828L1038.6 824.2H1049.4V834.6L1048 836" fill="#f4f4f4" stroke="#2a2a2a" stroke-width="1.2" stroke-linejoin="round"/><path d="M1035.4 828H1045.8V836M1045.8 828L1049.4 824.2" fill="none" stroke="#2a2a2a" stroke-width="1.1"/><rect x="1036" y="828.6" width="9.2" height="7.4" fill="#9ebbe0"/><circle cx="1040.4" cy="833.4" r="2.4" fill="#e8e8e8" stroke="#2a2a2a" stroke-width="0.9"/>
<path d="M1053.4 829.4h5.2l-2.6 3.5z" fill="#222"/>
<rect x="1068.4" y="825" width="11.4" height="2.6" fill="#8fb0e6" stroke="#4a6cb0" stroke-width="0.7"/><rect x="1067.6" y="829" width="13" height="2.6" fill="#8fb0e6" stroke="#4a6cb0" stroke-width="0.7"/><rect x="1068.4" y="833" width="11.4" height="2.6" fill="#8fb0e6" stroke="#4a6cb0" stroke-width="0.7"/><path d="M1068 828.3C1065.6 829 1065.6 832 1068 832.4M1080 828.3C1082.6 829 1082.6 832 1080 832.4" fill="none" stroke="#1f2a4a" stroke-width="1.4"/>
<path d="M1084.4 829.4h5.2l-2.6 3.5z" fill="#222"/>
</svg>
</body></html>
